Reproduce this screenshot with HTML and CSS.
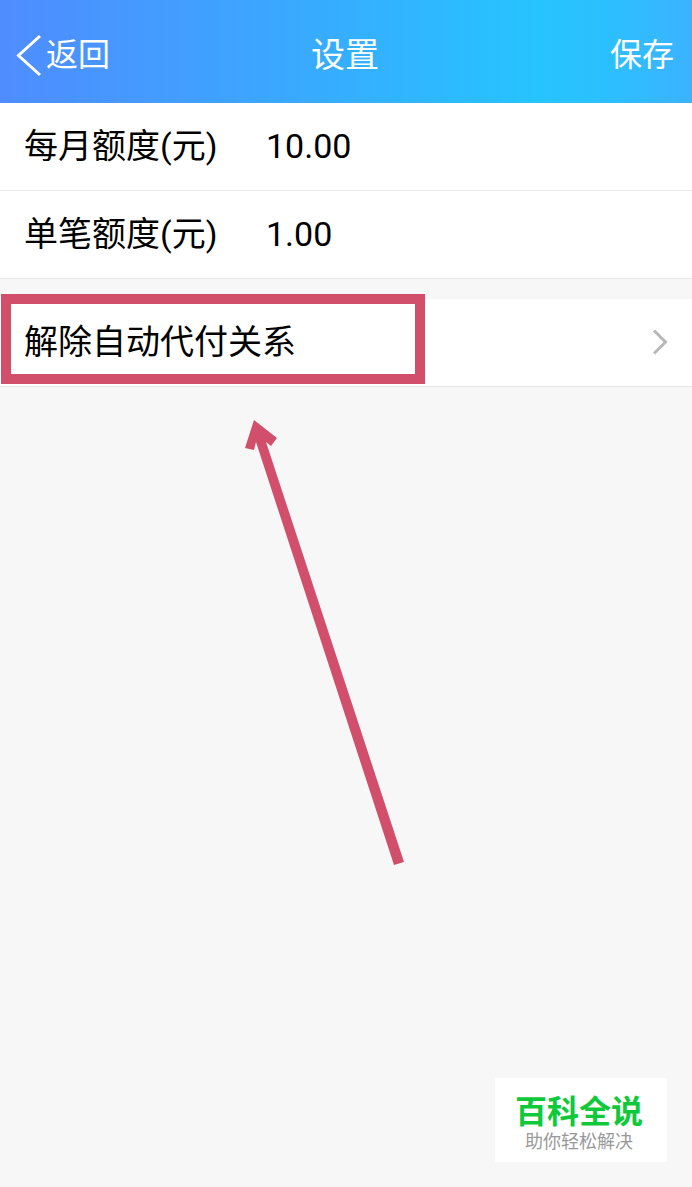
FILE: index.html
```html
<!DOCTYPE html>
<html lang="zh-CN">
<head>
<meta charset="utf-8">
<meta name="viewport" content="width=device-width, initial-scale=1">
<title>设置</title>
<link rel="stylesheet" href="styles.css">
</head>
<body>
<div class="screen">
  <header class="bar">
    <button class="bar-btn back" type="button">
      <svg class="back-icon" viewBox="0 0 26 44" aria-hidden="true"><path d="M24 3 2.500 22.500 24 42"/></svg>
      <span>返回</span>
    </button>
    <h1 class="title">设置</h1>
    <button class="bar-btn save" type="button">保存</button>
  </header>

  <main>
    <form class="group">
      <div class="row">
        <label class="label" for="monthly">每月额度(元)</label>
        <input class="amount" id="monthly" type="text" inputmode="decimal" value="10.00">
      </div>
      <div class="row">
        <label class="label" for="single">单笔额度(元)</label>
        <input class="amount" id="single" type="text" inputmode="decimal" value="1.00">
      </div>
    </form>

    <div class="group">
      <button class="row link-row" type="button">
        <span>解除自动代付关系</span>
        <svg class="chevron" viewBox="0 0 16 28" aria-hidden="true"><path d="M2 2.500 13.500 14 2 25.500"/></svg>
      </button>
      <div class="highlight"></div>
      <svg class="arrow" viewBox="0 0 160 448" aria-hidden="true"><path d="M9 1 32 19 26 27 21 23 159 443 149 446 11 23 9 31 0 29Z"/></svg>
    </div>
  </main>

  <aside class="badge">
    <strong class="badge-name">百科全说</strong>
    <span class="badge-text">助你轻松解决</span>
  </aside>
</div>
</body>
</html>
```

FILE: styles.css
```css
* {
  box-sizing: border-box;
}

body {
  margin: 0;
  background: #f7f7f7;
  color: #000;
  font-family: Roboto, "Noto Sans CJK SC", sans-serif;
  font-size: 34px;
  line-height: 48px;
}

button,
input {
  margin: 0;
  padding: 0;
  border: 0;
  background: none;
  color: inherit;
  font: inherit;
}

.screen {
  position: relative;
  min-height: 100vh;
}

.bar {
  display: grid;
  grid-template-columns: 1fr auto 1fr;
  align-items: center;
  height: 103px;
  padding: 6px 18px 0 16px;
  background: linear-gradient(90deg, #4f8cff 0%, #439dff 25%, #36adff 48%, #26c4ff 78%, #2cbfff 88%, #3bb3ff 100%);
  color: #fff;
}

.bar-btn {
  font-size: 32px;
}

.back {
  display: flex;
  align-items: center;
  gap: 4px;
  justify-self: start;
}

.back-icon {
  width: 26px;
  height: 44px;
  fill: none;
  stroke: #fff;
  stroke-width: 3;
}

.title {
  margin: 0;
  font-size: 34px;
  font-weight: 400;
}

.save {
  justify-self: end;
}

.group {
  position: relative;
  margin-bottom: 20px;
}

.row {
  display: flex;
  align-items: center;
  width: 100%;
  height: 88px;
  padding: 0 24px 2px;
  border-bottom: 1px solid #e9e9e9;
  background: #fff;
  text-align: left;
}

.label {
  width: 242px;
}

.amount {
  flex: 1;
  min-width: 0;
  outline: 0;
}

.link-row {
  justify-content: space-between;
}

.chevron {
  width: 16px;
  height: 28px;
  fill: none;
  stroke: #b8b8b8;
  stroke-width: 3;
}

.highlight {
  position: absolute;
  top: -5px;
  left: 1px;
  width: 424px;
  height: 90px;
  border: 10px solid #d24f6c;
  pointer-events: none;
}

.arrow {
  position: absolute;
  top: 120px;
  left: 245px;
  width: 160px;
  height: 448px;
  fill: #d24f6c;
}

.badge {
  position: absolute;
  right: 25px;
  bottom: 25px;
  display: flex;
  flex-direction: column;
  align-items: center;
  padding: 16px 24px 8px 20px;
  background: #fff;
}

.badge-name {
  color: #0fc93a;
  font-size: 32px;
  font-weight: 700;
  line-height: 36px;
}

.badge-text {
  color: #999;
  font-size: 18px;
  line-height: 24px;
}
```
